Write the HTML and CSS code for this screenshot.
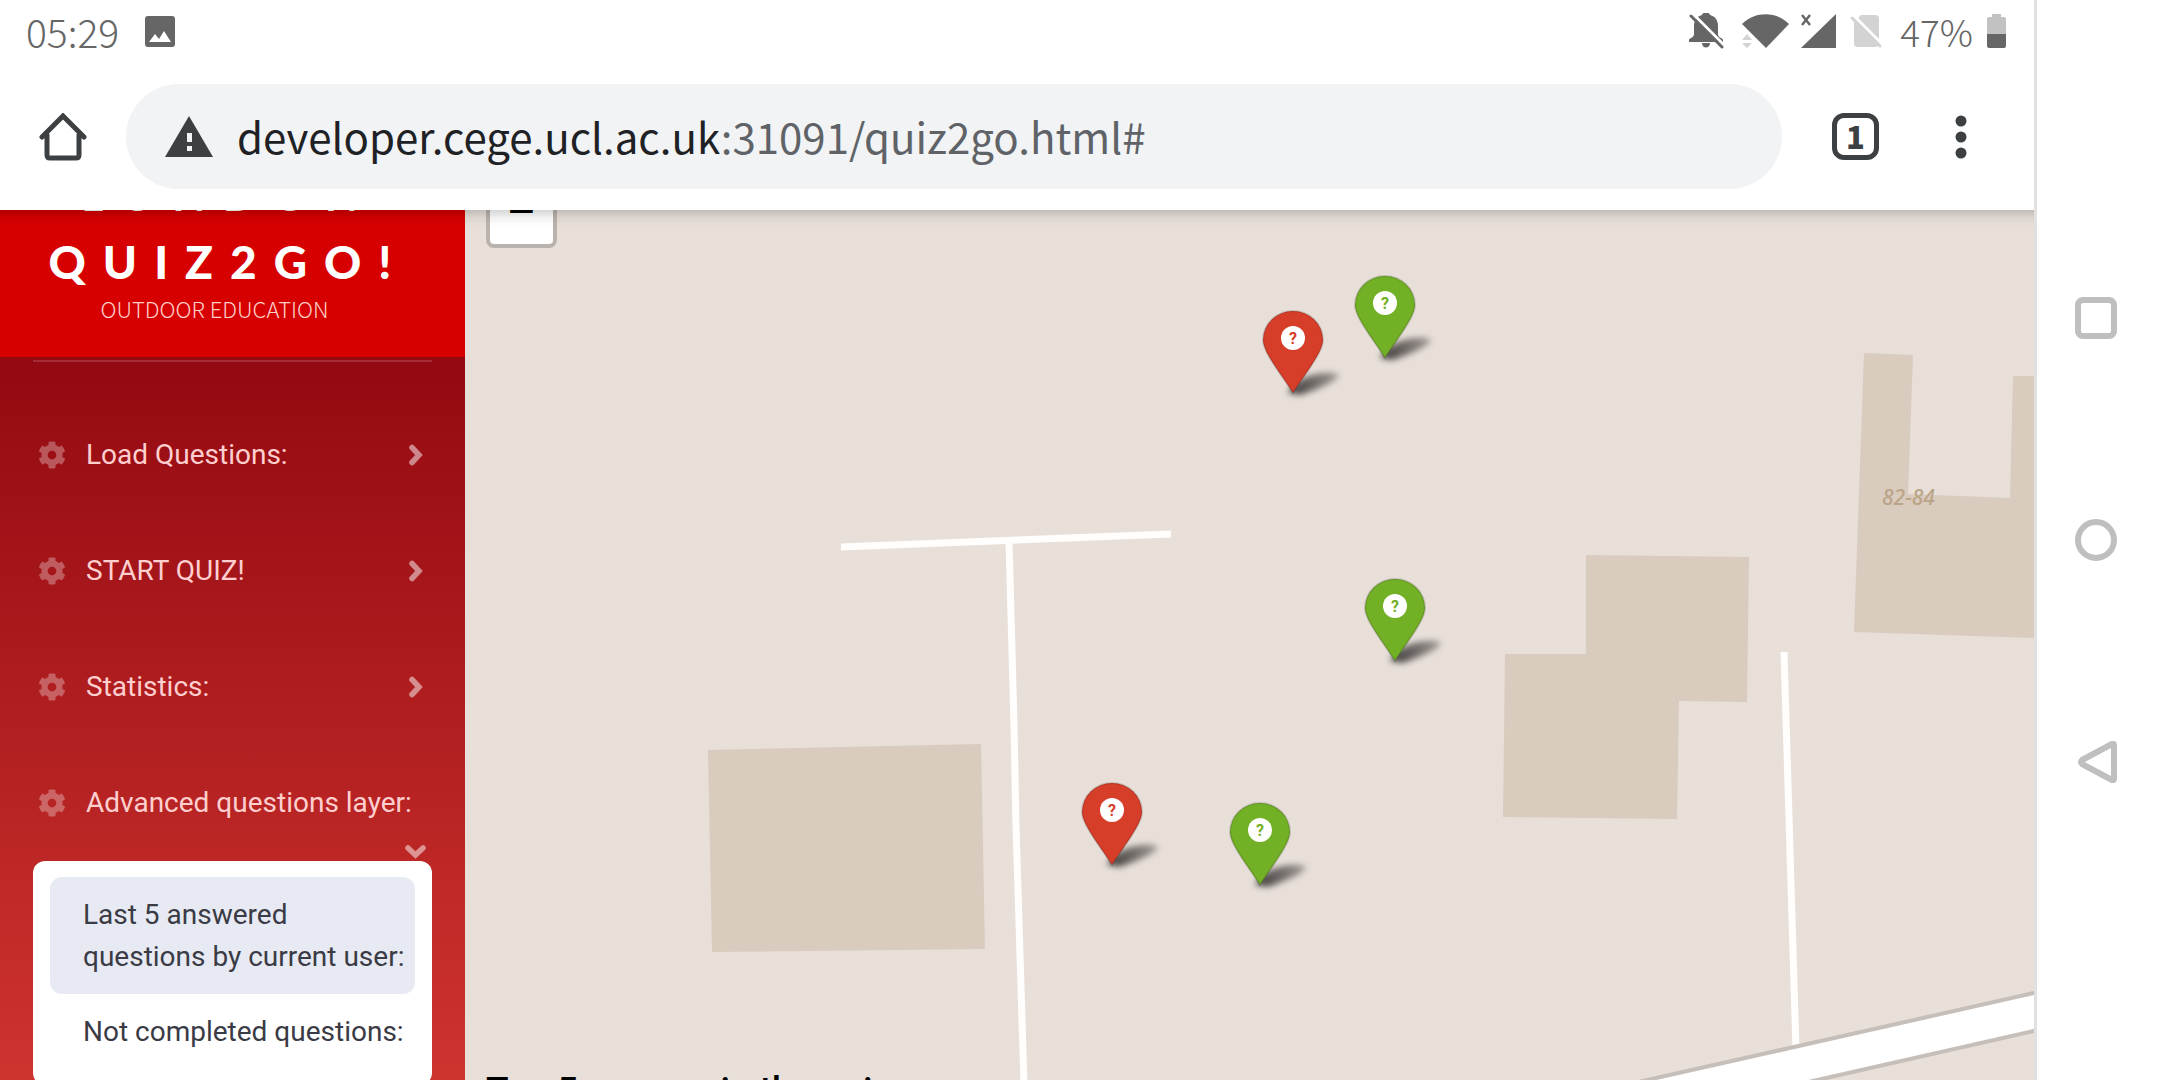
FILE: index.html
```html
<!DOCTYPE html>
<html lang="en">
<head>
<meta charset="utf-8">
<meta name="viewport" content="width=device-width, initial-scale=1">
<title>London Quiz2Go!</title>
<link rel="stylesheet" href="styles.css">
</head>
<body>
<svg class="defs" aria-hidden="true">
  <symbol id="cog" viewBox="0 0 512 512"><path d="M487.4 315.7l-42.6-24.6c4.3-23.2 4.3-47 0-70.2l42.6-24.6c4.9-2.8 7.1-8.6 5.5-14-11.1-35.6-30-67.8-54.7-94.6-3.8-4.1-10-5.1-14.8-2.3L380.8 110c-17.9-15.4-38.5-27.3-60.8-35.1V25.8c0-5.6-3.9-10.5-9.4-11.7-36.7-8.2-74.3-7.8-109.2 0-5.5 1.2-9.4 6.1-9.4 11.7V75c-22.2 7.9-42.8 19.8-60.8 35.1L88.7 85.5c-4.9-2.8-11-1.9-14.8 2.3-24.7 26.7-43.6 58.9-54.7 94.6-1.7 5.4.6 11.2 5.5 14L67.3 221c-4.3 23.2-4.3 47 0 70.2l-42.6 24.6c-4.9 2.8-7.1 8.6-5.5 14 11.1 35.6 30 67.8 54.7 94.6 3.8 4.1 10 5.1 14.8 2.3l42.6-24.6c17.9 15.4 38.5 27.3 60.8 35.1v49.2c0 5.6 3.9 10.5 9.4 11.7 36.7 8.2 74.3 7.8 109.2 0 5.5-1.2 9.4-6.1 9.4-11.7v-49.2c22.2-7.9 42.8-19.8 60.8-35.1l42.6 24.6c4.9 2.8 11 1.9 14.8-2.3 24.7-26.7 43.6-58.9 54.7-94.6 1.5-5.5-.7-11.3-5.6-14.1zM256 336c-44.1 0-80-35.9-80-80s35.9-80 80-80 80 35.9 80 80-35.9 80-80 80z"/></symbol>
  <symbol id="angle-right" viewBox="0 0 24 24"><path d="M8 4.500l7 7.500-7 7.500" fill="none" stroke="currentColor" stroke-width="5.500" stroke-linecap="round"/></symbol>
  <symbol id="angle-down" viewBox="0 0 24 24"><path d="M4 11l7.500 7 7.500-7" fill="none" stroke="currentColor" stroke-width="5.500" stroke-linecap="round"/></symbol>
</svg>

<div class="device">
  <div class="screen">
    <header class="chrome">
      <div class="status">
        <span class="time">05:29</span>
        <svg width="30" height="31" viewBox="0 0 30 31"><rect width="30" height="31" rx="3" fill="#666"/><path d="M4 26l6-8 4 5 5-8 7 11z" fill="#fff"/></svg>
        <div class="status-right">
          <svg width="41" height="36" viewBox="0 0 41 36"><path d="M0 29v-2c0-2 5-2 5-6v-8C5 6 9 3 13 2c0-3 8-3 8 0 4 1 8 4 8 11v8c0 4 5 4 5 6v2z" fill="#666"/><path d="M13 30h8c0 6-8 6-8 0z" fill="#666"/><path d="M4 1l31 31" stroke="#fff" stroke-width="3"/><path d="M2 3l31 31" stroke="#666" stroke-width="3" stroke-linecap="round"/></svg>
          <svg width="47" height="36" viewBox="0 0 47 36"><path d="M0 11C13-2 34-2 47 11L24 35z" fill="#666"/><path d="M0 27l5-6 5 6zM0 30l5 5 5-5z" fill="#d3d3d3"/></svg>
          <svg width="36" height="36" viewBox="0 0 36 36"><path d="M0 35L35 1v34z" fill="#666"/><path d="M1 2l8 10M9 2L1 12" stroke="#666" stroke-width="2.500"/></svg>
          <svg width="39" height="36" viewBox="0 0 39 36"><path d="M12 2h14q4 0 4 4v24q0 4-4 4H8q-3 0-3-4V9z" fill="#d3d3d3"/><path d="M5 3l28 28" stroke="#fff" stroke-width="3"/><path d="M3 5l28 28" stroke="#d3d3d3" stroke-width="3" stroke-linecap="round"/></svg>
          <span>47%</span>
          <svg width="21" height="36" viewBox="0 0 21 36"><path d="M7 1h9v3h3q2 0 2 2v15H2V6q0-2 2-2h3z" fill="#c2c2c2"/><path d="M2 21h19v12q0 2-2 2H4q-2 0-2-2z" fill="#666"/></svg>
        </div>
      </div>
      <div class="toolbar">
        <button class="tool tool-home" aria-label="Home"><svg width="48" height="48" viewBox="0 0 48 48"><path d="M8 22v20q0 3 3 3h26q3 0 3-3V22M3 24L24 3l21 21" fill="none" stroke="#3c4043" stroke-width="5" stroke-linecap="round"/></svg></button>
        <button class="omnibox" aria-label="Address bar">
          <svg width="48" height="42" viewBox="0 0 48 42"><path d="M24 0l24 41H0z" fill="#3c4043"/><path d="M22 17h5v9h-5zM22 30h5v5h-5z" fill="#f1f3f4"/></svg>
          <span class="url">developer.cege.ucl.ac.uk<span class="url-path">:31091/quiz2go.html#</span></span>
        </button>
        <button class="tool" aria-label="Tabs"><span class="tab-count">1</span></button>
        <button class="tool" aria-label="Menu"><svg width="12" height="44" viewBox="0 0 12 44"><g fill="#3c4043"><circle cx="6" cy="6" r="5.500"/><circle cx="6" cy="22" r="5.500"/><circle cx="6" cy="38" r="5.500"/></g></svg></button>
      </div>
    </header>

    <main class="page">
      <aside class="sidebar">
        <a class="brand" href="#">
          <span class="brand-name">LONDON</span>
          <span class="brand-name brand-main">QUIZ2GO!</span>
          <span class="brand-sub">OUTDOOR EDUCATION</span>
        </a>
        <nav class="menu">
          <hr>
          <button class="item"><svg class="cog"><use href="#cog"/></svg><span>Load Questions:</span><svg class="angle"><use href="#angle-right"/></svg></button>
          <button class="item"><svg class="cog"><use href="#cog"/></svg><span>START QUIZ!</span><svg class="angle"><use href="#angle-right"/></svg></button>
          <button class="item"><svg class="cog"><use href="#cog"/></svg><span>Statistics:</span><svg class="angle"><use href="#angle-right"/></svg></button>
          <button class="item item-open" aria-expanded="true"><svg class="cog"><use href="#cog"/></svg><span>Advanced questions layer:</span><svg class="angle"><use href="#angle-down"/></svg></button>
          <div class="submenu">
            <a class="active" href="#">Last 5 answered<br>questions by current user:</a>
            <a href="#">Not completed questions:</a>
          </div>
        </nav>
      </aside>

      <section class="map">
        <svg class="tiles" viewBox="465 210 1569 870" preserveAspectRatio="xMinYMin slice" role="img" aria-label="Map">
          <defs>
            <filter id="soft" x="-50%" y="-80%" width="200%" height="260%"><feGaussianBlur stdDeviation="3"/></filter>
            <linearGradient id="shade"><stop offset="0" stop-opacity=".75"/><stop offset="1" stop-opacity=".3"/></linearGradient>
            <g id="pin">
              <path d="M-5 0C2-14 22-22 42-20 54-17 34-7 8 2z" fill="url(#shade)" filter="url(#soft)"/>
              <path d="M0 0C-9-15-30-40-30-53A30 29 0 0 1 30-53C30-40 9-15 0 0z" stroke="#000" stroke-opacity=".15" stroke-width="2"/>
              <circle cy="-55" r="12" fill="#fff"/>
              <text y="-49" text-anchor="middle">?</text>
            </g>
          </defs>
          <g fill="#d9cbbe">
            <path d="M708 750L981 744 985 949 712 952z"/>
            <path d="M1586 555L1749 557 1747 702 1679 701 1677 819 1503 817 1505 654 1586 654z"/>
            <path d="M1864 353L1913 355 1908 494 2010 498 2013 376H2400V640L2034 638 1854 632z"/>
          </g>
          <g fill="none" stroke="#fffefc" stroke-width="7">
            <path d="M841 547L1171 534M1009 541L1014 725 1016 826 1024 1084M1784 652L1796 1050"/>
          </g>
          <path d="M1634 1083L2034 993 2400 910V949L2034 1031 1804 1083z" fill="#fff" stroke="#c6beb8" stroke-width="4"/>
          <text class="house-number" x="1882" y="505">82-84</text>
          <g class="pin-green"><use href="#pin" x="1385" y="358"/><use href="#pin" x="1395" y="661"/><use href="#pin" x="1260" y="885"/></g>
          <g class="pin-red"><use href="#pin" x="1293" y="393"/><use href="#pin" x="1112" y="865"/></g>
        </svg>
        <button class="zoom-out" aria-label="Zoom out">−</button>
        <h3 class="scores">Top 5 scorers in the quiz</h3>
      </section>
    </main>
  </div>

  <nav class="android-nav" aria-label="System navigation">
    <button aria-label="Recent apps"><svg width="42" height="42" viewBox="0 0 42 42"><rect x="3" y="3" width="36" height="36" rx="5"/></svg></button>
    <button aria-label="Home screen"><svg width="42" height="42" viewBox="0 0 42 42"><circle cx="21" cy="21" r="18"/></svg></button>
    <button aria-label="Back"><svg width="42" height="42" viewBox="0 0 42 42"><path d="M37 3L7 19q-2 2 0 4l30 16q2 1 2-1V4q0-2-2-1z"/></svg></button>
  </nav>
</div>
</body>
</html>
```
FILE: styles.css
```css
* { box-sizing: border-box; }

body {
  margin: 0;
  font-family: Roboto, sans-serif;
  font-size: 28px;
  background: #fff;
}

button {
  margin: 0;
  padding: 0;
  border: 0;
  background: none;
  font: inherit;
  color: inherit;
  text-align: left;
}

a { color: inherit; text-decoration: none; }
svg { display: block; flex: none; }
.defs { position: absolute; width: 0; height: 0; }

.device { display: flex; height: 100vh; overflow: hidden; }
.screen { flex: 1; min-width: 0; display: flex; flex-direction: column; }

/* Status bar and browser toolbar */
.status {
  display: flex;
  align-items: center;
  gap: 26px;
  height: 62px;
  padding: 0 28px 0 26px;
  color: #666;
  font-family: "Noto Sans CJK SC", sans-serif;
  font-weight: 300;
  font-size: 37px;
  line-height: 60px;
}
.time { font-size: 39px; }
.status-right { display: flex; align-items: center; gap: 12px; margin-left: auto; }

.toolbar { display: flex; align-items: center; padding: 22px 21px 21px 0; }
.tool { flex: none; width: 105px; display: flex; justify-content: center; }
.tool-home { width: 126px; }
.omnibox {
  flex: 1;
  min-width: 0;
  display: flex;
  align-items: center;
  gap: 24px;
  height: 105px;
  margin-right: 21px;
  padding: 0 39px;
  border-radius: 53px;
  background: #f1f3f4;
}
.url {
  padding-bottom: 2px;
  color: #202124;
  font-family: "Noto Sans CJK SC", sans-serif;
  font-size: 42px;
  line-height: 60px;
  white-space: nowrap;
}
.url-path { color: #5f6368; }
.tab-count {
  width: 47px;
  height: 47px;
  border: 5px solid #3c4043;
  border-radius: 12px;
  color: #3c4043;
  font-family: "Noto Sans CJK SC", sans-serif;
  font-weight: 900;
  font-size: 31px;
  line-height: 35px;
  text-align: center;
}

/* Page */
.page { position: relative; flex: 1; min-height: 0; display: flex; overflow: hidden; }
.page::before {
  content: "";
  position: absolute;
  z-index: 2;
  inset: 0 0 auto;
  height: 16px;
  background: linear-gradient(rgba(0, 0, 0, .16), rgba(0, 0, 0, .05) 50%, transparent);
}

.sidebar { flex: none; width: 465px; display: flex; flex-direction: column; }
.brand {
  flex: none;
  display: flex;
  flex-direction: column;
  justify-content: flex-end;
  align-items: center;
  height: 147px;
  padding: 0 36px 35px 0;
  overflow: hidden;
  background: #d60000;
  color: #fff;
}
.brand-name {
  padding-left: 28px;
  font-family: Lato, sans-serif;
  font-weight: 900;
  font-size: 42px;
  line-height: 56px;
  letter-spacing: 18px;
}
.brand-main { margin: 11px 0 4px; font-size: 46px; letter-spacing: 17px; }
.brand-sub {
  font-family: "Noto Sans CJK SC", sans-serif;
  font-weight: 300;
  font-size: 22px;
  line-height: 28px;
  color: #ffd0cc;
}

.menu {
  flex: 1;
  padding: 3px 33px 0;
  background: linear-gradient(#930911, #cf342f);
  color: #ffcfcf;
}
.menu hr { height: 2px; margin: 0 0 35px; border: 0; background: rgba(255, 255, 255, .15); }
.item {
  display: flex;
  align-items: center;
  width: 100%;
  padding: 33px 4px 33px 5px;
  line-height: 50px;
  white-space: nowrap;
}
.cog { width: 28px; height: 28px; margin-right: 20px; fill: #fff; opacity: .3; }
.angle { width: 24px; height: 24px; margin-left: auto; color: #fff; opacity: .5; }
.item-open { flex-wrap: wrap; padding-bottom: 0; }
.item-open span { flex: 1; }
.item-open .angle { margin-top: 9px; }

.submenu {
  padding: 16px 17px;
  border-radius: 12px;
  background: #fff;
  color: #3a3b45;
}
.submenu a {
  display: block;
  padding: 17px 0 16px 33px;
  border-radius: 12px;
  line-height: 42px;
  white-space: nowrap;
}
.submenu .active { background: #e7eaf3; }

/* Map */
.map { position: relative; flex: 1; min-width: 0; overflow: hidden; background: #e8dfd9; }
.tiles { width: 100%; height: 100%; }
.tiles text { font-family: Roboto, sans-serif; font-weight: 700; font-size: 16px; }
.tiles .house-number {
  font-family: "Noto Sans", sans-serif;
  font-style: italic;
  font-weight: 500;
  font-size: 21px;
  fill: #bba488;
}
.pin-red { fill: #d63e2a; }
.pin-green { fill: #72b026; }
.zoom-out {
  position: absolute;
  top: -32px;
  left: 21px;
  width: 71px;
  height: 70px;
  border: 4px solid #b9b2ad;
  border-radius: 8px;
  background: #fff;
  color: #000;
  font-family: "DejaVu Sans Mono", monospace;
  font-weight: 700;
  font-size: 42px;
  line-height: 56px;
  padding-bottom: 6px;
  text-align: center;
}
.scores {
  position: absolute;
  left: 21px;
  bottom: -33px;
  margin: 0;
  font-weight: 500;
  font-size: 37px;
  line-height: 44px;
  color: #000;
}

/* Android navigation */
.android-nav {
  flex: none;
  width: 126px;
  display: flex;
  flex-direction: column;
  justify-content: center;
  align-items: center;
  gap: 180px;
  padding-right: 5px;
  border-left: 3px solid #e0e0e0;
}
.android-nav svg { fill: none; stroke: #bfbfbf; stroke-width: 6; }
```
